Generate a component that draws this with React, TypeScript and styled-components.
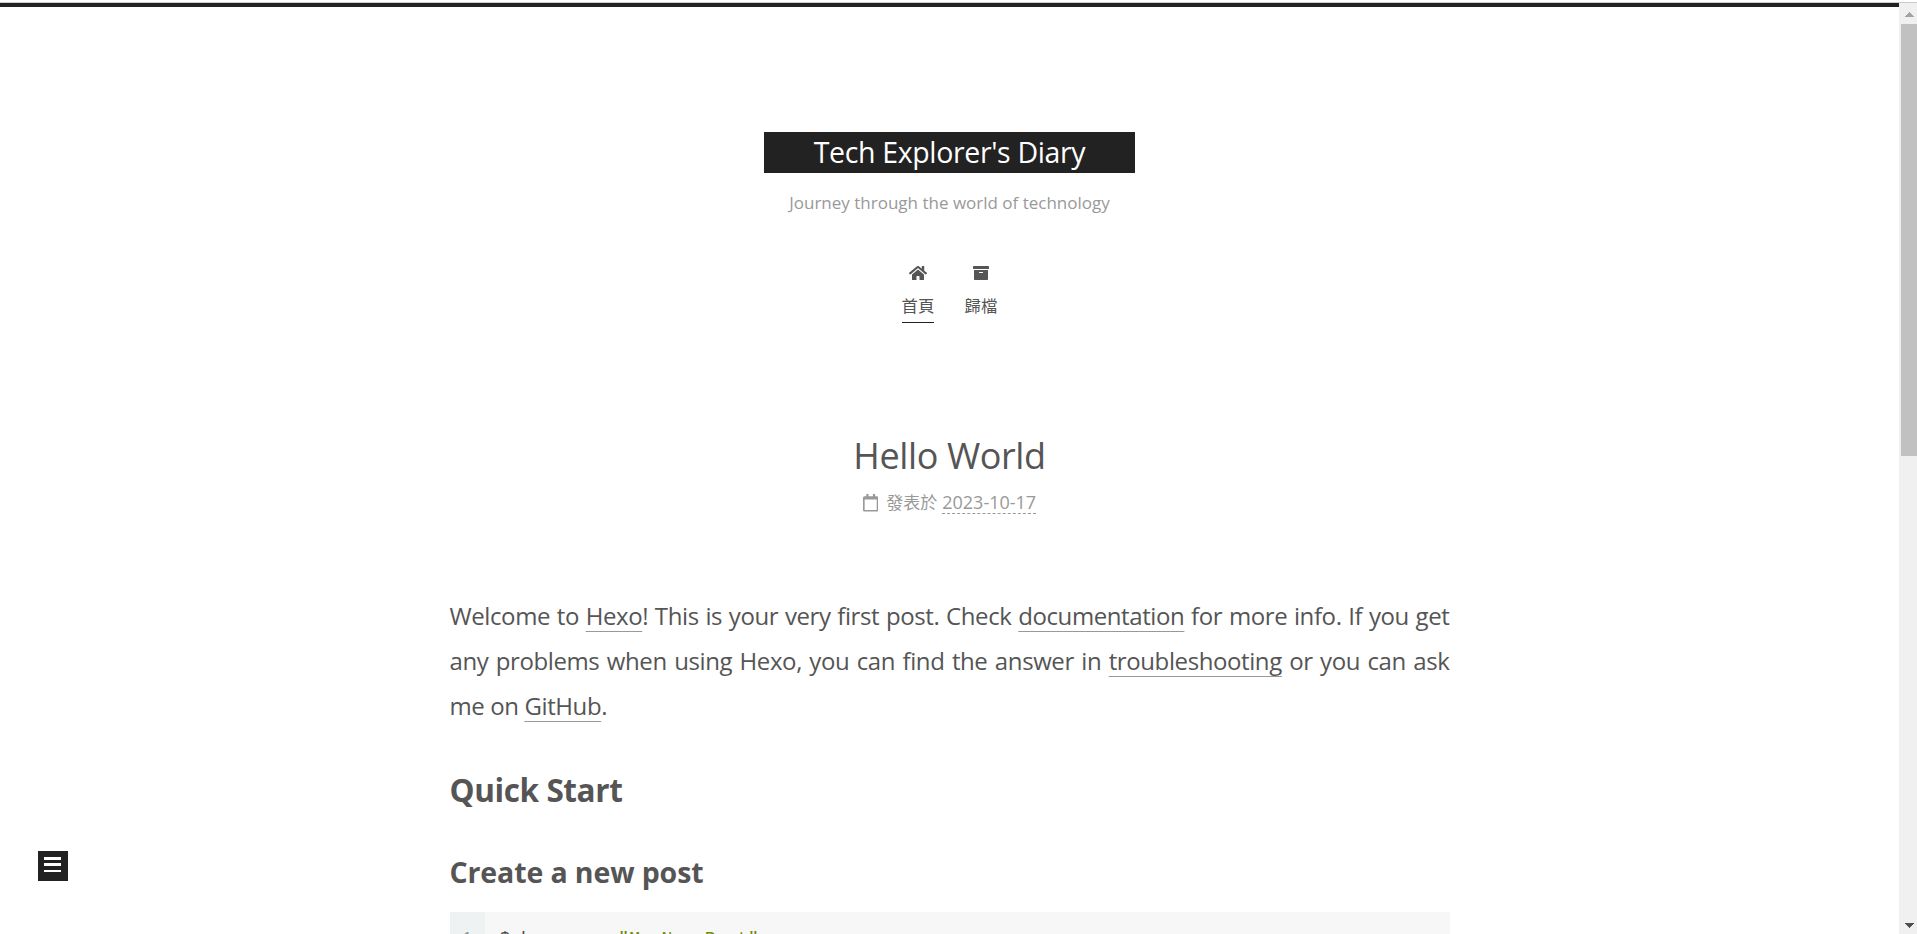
import React from 'react'
import styled, { createGlobalStyle } from 'styled-components'
import { FaHome, FaArchive, FaRegCalendar } from 'react-icons/fa'

const GlobalStyle = createGlobalStyle`
    * {
        box-sizing: border-box;
    }
    body {
        margin: 0;
        background: #fff;
        color: #555;
        font-family: 'Open Sans', 'Noto Sans CJK TC', sans-serif;
        overflow: hidden;
    }
    h1, h2, h3, p, pre, ul {
        margin: 0;
        padding: 0;
    }
    a {
        color: inherit;
        text-decoration: none;
    }
`;

const Window = styled.div`
    display: flex;
    height: 934px;
    padding-top: 2px;
    overflow: hidden;
`;

const Frame = styled.div`
    display: flex;
    flex: 1;
    border-top: 1px solid #ccc;
`;

const Page = styled.div`
    flex: 1;
    height: 931px;
    overflow: hidden;
    border-top: 4px solid #222;
`;

const Header = styled.header`
    display: flex;
    flex-direction: column;
    align-items: center;
    padding-top: 125px;
`;

const Brand = styled.a`
    width: 371px;
    height: 41px;
    background: #222;
    color: #fff;
    text-align: center;

    h1{
        font-size: 28.5px;
        font-weight: 400;
        line-height: 41px;
        letter-spacing: -0.35px;
    }
`;

const Subtitle = styled.p`
    margin-top: 18px;
    color: #999;
    font-size: 17px;
    line-height: 24px;
`;

const Menu = styled.ul`
    display: flex;
    gap: 31px;
    margin-top: 50px;
    list-style: none;
`;

const MenuItem = styled.li<{ $active?: boolean }>`
    display: flex;
    flex-direction: column;
    align-items: center;
    width: 32px;
    height: 58px;
    border-bottom: 1px solid ${({ $active }) => ($active ? '#222' : 'transparent')};
    font-family: 'Noto Sans CJK TC', sans-serif;
    font-size: 16.4px;
    font-weight: 400;
    line-height: 24px;
    white-space: nowrap;

    svg{
        width: 18px;
        height: 16px;
        margin-bottom: 12px;
    }
`;

const Post = styled.article`
    width: 1000px;
    margin: 106px auto 0;
`;

const PostTitle = styled.h2`
    font-size: 36px;
    font-weight: 400;
    line-height: 54px;
    letter-spacing: -0.4px;
    text-align: center;
`;

const PostMeta = styled.div`
    display: flex;
    justify-content: center;
    height: 24px;
    margin-top: 7px;
    color: #999;
    font-size: 18px;
    line-height: 24px;

    svg{
        width: 15.4px;
        height: 17.6px;
        margin: 4px 8px 0 0;
    }
    span{
        margin-right: 5px;
        font-family: 'Noto Sans CJK TC', sans-serif;
        font-size: 17px;
        font-weight: 400;
    }
    time{
        border-bottom: 1px dashed #999;
    }
`;

const PostBody = styled.div`
    margin-top: 79px;

    p{
        font-size: 24px;
        line-height: 45px;
        letter-spacing: -0.4px;
        text-align: justify;
    }
    p a{
        text-decoration: underline 1px #999;
        text-decoration-skip-ink: none;
        text-underline-offset: 6px;
    }
    h2{
        margin-top: 39px;
        font-size: 31.5px;
        line-height: 46px;
        letter-spacing: -0.4px;
    }
    h3{
        margin-top: 38px;
        font-size: 28.5px;
        line-height: 42px;
        letter-spacing: -0.12px;
    }
`;

const CodeBlock = styled.div`
    display: flex;
    margin-top: 19px;
    background: #f7f7f7;
    color: #4d4d4c;
    font-size: 18px;
    line-height: 29px;

    pre{
        padding: 13px 15px;
        font-family: 'Liberation Mono', monospace;
    }
`;

const Gutter = styled.div`
    width: 35px;
    padding: 13px 12px;
    background: #eff2f3;
    color: #869194;
    font-family: 'Liberation Mono', monospace;
`;

const CodeString = styled.span`
    color: #718c00;
`;

const SidebarToggle = styled.button`
    position: fixed;
    left: 38px;
    bottom: 53px;
    display: flex;
    flex-direction: column;
    gap: 3px;
    width: 30px;
    height: 30px;
    padding: 6px 7px 0 6px;
    border: 0;
    background: #222;
    cursor: pointer;
`;

const ToggleLine = styled.span<{ $thin?: boolean }>`
    height: ${({ $thin }) => ($thin ? '2px' : '3px')};
    margin-top: ${({ $thin }) => ($thin ? '1px' : '0')};
    background: #fff;
`;

const Scrollbar = styled.div`
    display: flex;
    flex-direction: column;
    justify-content: space-between;
    width: 18px;
    height: 931px;
    padding-left: 2px;
    background: #f0f0f0;
`;

const Thumb = styled.div`
    height: 432px;
    margin-bottom: auto;
    background: #c1c1c1;
`;

const Arrow = styled.svg`
    display: block;
    width: 16px;
    height: 21px;
`;

const App: React.FC = () => {
  return (
    <>
      <GlobalStyle />
      <Window>
        <Frame>
          <Page>
            <Header>
              <Brand href='#'>
                <h1>Tech Explorer's Diary</h1>
              </Brand>
              <Subtitle>Journey through the world of technology</Subtitle>
              <Menu>
                <MenuItem $active>
                  <FaHome />
                  首頁
                </MenuItem>
                <MenuItem>
                  <FaArchive />
                  歸檔
                </MenuItem>
              </Menu>
            </Header>
            <Post>
              <PostTitle>Hello World</PostTitle>
              <PostMeta>
                <FaRegCalendar />
                <span>發表於</span>
                <time>2023-10-17</time>
              </PostMeta>
              <PostBody>
                <p>
                  Welcome to <a href='#'>Hexo</a>! This is your very first post. Check{' '}
                  <a href='#'>documentation</a> for more info. If you get any problems when using
                  Hexo, you can find the answer in <a href='#'>troubleshooting</a> or you can ask me
                  on <a href='#'>GitHub</a>.
                </p>
                <h2>Quick Start</h2>
                <h3>Create a new post</h3>
                <CodeBlock>
                  <Gutter>1</Gutter>
                  <pre>
                    $ hexo new <CodeString>"My New Post"</CodeString>
                  </pre>
                </CodeBlock>
              </PostBody>
            </Post>
          </Page>
          <Scrollbar>
            <Arrow viewBox='0 0 16 21' shapeRendering='crispEdges'>
              <path d='M4 14h9L8.5 9z' fill='#a3a3a3' />
            </Arrow>
            <Thumb />
            <Arrow viewBox='0 0 16 21' shapeRendering='crispEdges'>
              <path d='M4 10h9L8.5 15z' fill='#505050' />
            </Arrow>
          </Scrollbar>
        </Frame>
      </Window>
      <SidebarToggle>
        <ToggleLine />
        <ToggleLine />
        <ToggleLine $thin />
      </SidebarToggle>
    </>
  )
}

export default App
